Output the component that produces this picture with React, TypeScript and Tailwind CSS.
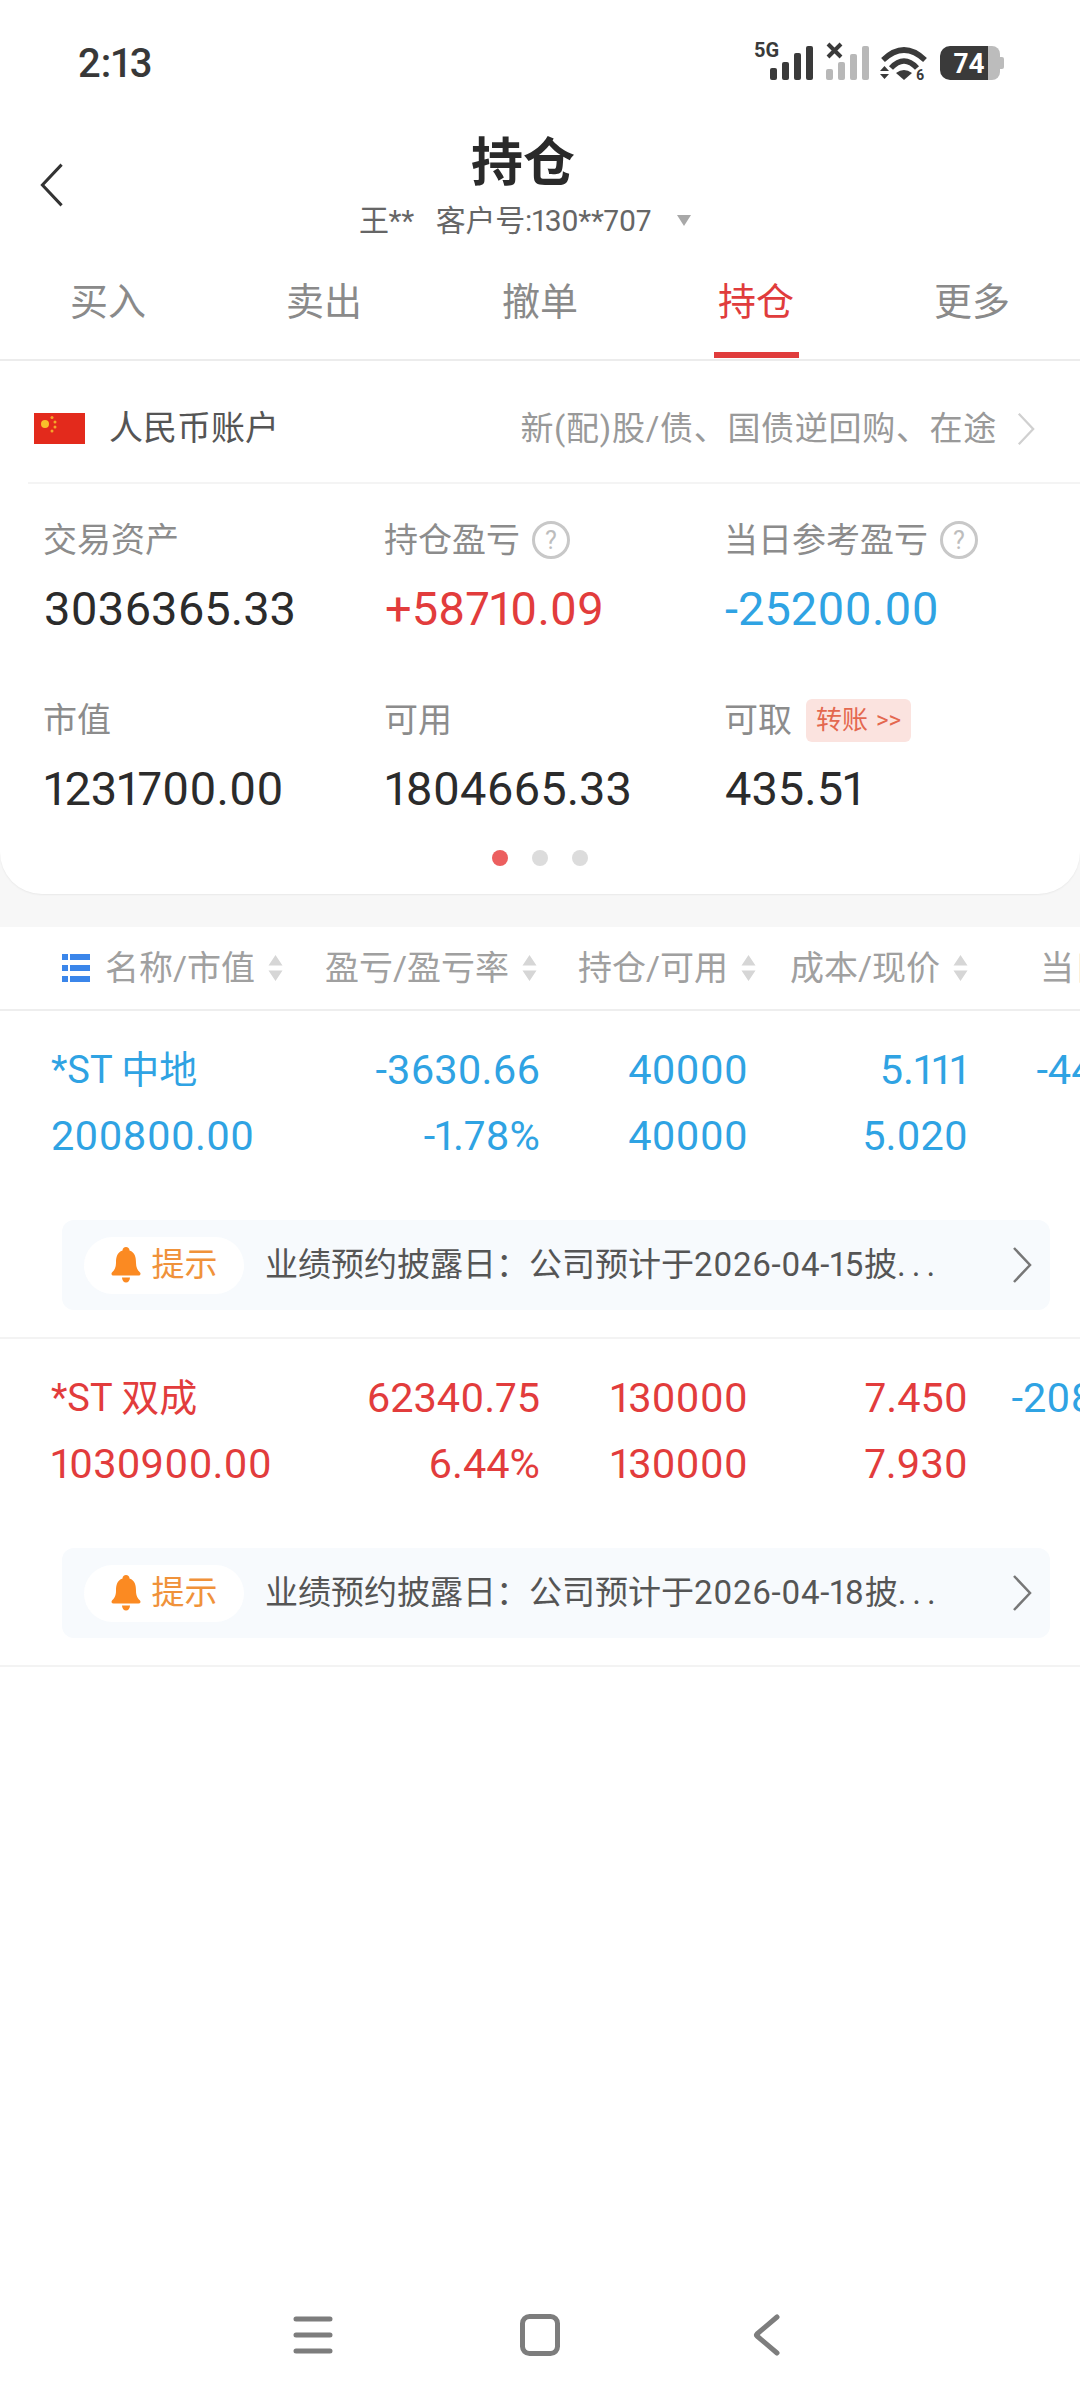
import { ReactNode } from 'react';

const FONT = "font-['Roboto','Noto_Sans_CJK_SC',sans-serif] proportional-nums";

const TABS = ['买入', '卖出', '撤单', '持仓', '更多'];

const POSITIONS = [
  {
    color: 'text-[#2fa3e3]',
    name: '*ST 中地',
    value: '200800.00',
    pnl: '-3630.66',
    rate: '-1.78%',
    hold: '40000',
    free: '40000',
    cost: '5.111',
    price: '5.020',
    day: '-4400.00',
    date: '2026-04-15',
  },
  {
    color: 'text-[#e23c3c]',
    name: '*ST 双成',
    value: '1030900.00',
    pnl: '62340.75',
    rate: '6.44%',
    hold: '130000',
    free: '130000',
    cost: '7.450',
    price: '7.930',
    day: '-20800.00',
    date: '2026-04-18',
  },
];

function StatusIcons() {
  return (
    <svg width="258" height="64" viewBox="750 30 258 64" className="shrink-0">
      <text x="754" y="57" fontSize="20" fontWeight="700" fill="#3a3a3a" fontFamily="Roboto, sans-serif">
        5G
      </text>
      <g fill="#3a3a3a">
        <rect x="770" y="68" width="7" height="12" rx="2" />
        <rect x="782" y="62" width="7" height="18" rx="2" />
        <rect x="794" y="53" width="7" height="27" rx="2" />
        <rect x="806" y="46" width="7" height="34" rx="2" />
      </g>
      <path d="M828 44l13 13M841 44l-13 13" stroke="#3a3a3a" strokeWidth="4" fill="none" />
      <g fill="#b8b8b8">
        <rect x="826" y="69" width="7" height="11" rx="2" />
        <rect x="838" y="62" width="7" height="18" rx="2" />
        <rect x="850" y="54" width="7" height="26" rx="2" />
        <rect x="862" y="46" width="7" height="34" rx="2" />
      </g>
      <path d="M883 60Q904 40 925 60" stroke="#3a3a3a" strokeWidth="5.5" fill="none" />
      <path d="M891 68Q904 54 917 68" stroke="#3a3a3a" strokeWidth="5.5" fill="none" />
      <path d="M896 73Q904 67 912 73L904 80Z" fill="#3a3a3a" />
      <path d="M880 71h9l-4.500-5ZM880 74h9l-4.500 5Z" fill="#3a3a3a" />
      <text x="916" y="80" fontSize="14" fontWeight="700" fill="#3a3a3a" fontFamily="Roboto, sans-serif">
        6
      </text>
      <path d="M950 46H988V80H950A10 10 0 0 1 940 70V56A10 10 0 0 1 950 46Z" fill="#3a3a3a" />
      <path d="M988 46H992A8 8 0 0 1 1000 54V72A8 8 0 0 1 992 80H988Z" fill="#bcbcbc" />
      <path d="M1000 57h2a2 2 0 0 1 2 2v8a2 2 0 0 1-2 2h-2Z" fill="#bcbcbc" />
      <text x="969" y="73" textAnchor="middle" fontSize="28" fontWeight="700" fill="#fff" fontFamily="Roboto, sans-serif">
        74
      </text>
    </svg>
  );
}

function Flag() {
  return (
    <svg width="51" height="31" viewBox="0 0 51 31" className="shrink-0">
      <rect width="51" height="31" fill="#e32a1c" />
      <circle cx="11" cy="11" r="4" fill="#f9c12a" />
      <g fill="#f4a62a">
        <circle cx="18" cy="4.500" r="1.500" />
        <circle cx="21" cy="9" r="1.500" />
        <circle cx="21" cy="14" r="1.500" />
        <circle cx="18" cy="18" r="1.500" />
      </g>
    </svg>
  );
}

function Chevron({ className }: { className: string }) {
  return (
    <svg viewBox="0 0 20 36" className={className} fill="none" stroke="currentColor" strokeWidth="2.500">
      <path d="M2 1l16 17L2 35" />
    </svg>
  );
}

function Help() {
  return (
    <span className="ml-[12px] flex h-[38px] w-[38px] items-center justify-center rounded-full border-[3px] border-[#c8c8c8] text-[25px] leading-none text-[#bdbdbd]">
      ?
    </span>
  );
}

function Metric({ label, extra, value, color }: { label: string; extra?: ReactNode; value: string; color: string }) {
  return (
    <div>
      <div className="flex h-[48px] items-center text-[34px] text-[#8c8c8c]">
        {label}
        {extra}
      </div>
      <div className={`mt-[12px] flex h-[64px] items-center pl-[1px] text-[47px] leading-none ${color}`}>{value}</div>
    </div>
  );
}

function SortIcon() {
  return (
    <svg width="17" height="26" viewBox="0 0 17 26" className="ml-[12px] shrink-0" fill="#d6d6d6">
      <path d="M8.500 0l7 10.500h-14zM8.500 26l-7-10.500h14z" />
    </svg>
  );
}

function HeaderCell({ label, width }: { label: string; width: string }) {
  return (
    <div className={`flex shrink-0 items-center ${width}`}>
      {label}
      <SortIcon />
    </div>
  );
}

function ListIcon() {
  return (
    <svg width="28" height="28" viewBox="0 0 28 28" className="mr-[15px] shrink-0" fill="#3b86ea">
      <path d="M0 0h6v6H0zM8 0h20v6H8zM0 11h6v6H0zM8 11h20v6H8zM0 22h6v6H0zM8 22h20v6H8z" />
    </svg>
  );
}

function Bell() {
  return (
    <svg width="30" height="36" viewBox="0 0 30 36" className="shrink-0" fill="#fb8a22">
      <path d="M15 0c2 0 3.500 1.500 3.500 3.500C24 5.500 25 10 25 16c0 5 2 7.500 4 9.500 1 1 .5 3-1.500 3h-25c-2 0-2.500-2-1.500-3 2-2 4-4.500 4-9.500 0-6 1-10.500 6.500-12.500C11.500 1.500 13 0 15 0z" />
      <path d="M11 30.500h8c0 3-2 5-4 5s-4-2-4-5z" />
    </svg>
  );
}

function PositionRow({ item }: { item: (typeof POSITIONS)[number] }) {
  return (
    <div className="border-b-2 border-[#f3f3f3] pb-[27px] pt-[26px]">
      <div className={`flex h-[66px] items-center overflow-hidden whitespace-nowrap pl-[51px] text-[41.5px] ${item.color}`}>
        <div className="w-[289px] shrink-0 text-[38px]">{item.name}</div>
        <div className="w-[200px] shrink-0 text-right">{item.pnl}</div>
        <div className="w-[208px] shrink-0 text-right">{item.hold}</div>
        <div className="w-[220px] shrink-0 text-right">{item.cost}</div>
        <div className="w-[234px] shrink-0 text-right text-[#2fa3e3]">{item.day}</div>
      </div>
      <div className={`flex h-[66px] items-center overflow-hidden whitespace-nowrap pl-[51px] text-[41.5px] ${item.color}`}>
        <div className="w-[289px] shrink-0">{item.value}</div>
        <div className="w-[200px] shrink-0 text-right">{item.rate}</div>
        <div className="w-[208px] shrink-0 text-right">{item.free}</div>
        <div className="w-[220px] shrink-0 text-right">{item.price}</div>
      </div>
      <div className="ml-[62px] mr-[30px] mt-[51px] flex h-[90px] items-center rounded-[12px] bg-[#f7fafd] pl-[22px] pr-[18px]">
        <div className="flex h-[57px] w-[160px] shrink-0 items-center justify-center gap-[11px] rounded-full bg-white text-[33px] text-[#f0923a]">
          <Bell />
          提示
        </div>
        <div className="ml-[21px] flex-1 whitespace-nowrap text-[33px] text-[#555555]">
          业绩预约披露日：公司预计于<span className="tracking-[0.6px]">{item.date}</span>披<span className="tracking-[6px]">...</span>
        </div>
        <Chevron className="h-[36px] w-[20px] shrink-0 text-[#777777]" />
      </div>
    </div>
  );
}

export default function App() {
  return (
    <div className={`flex h-[2400px] w-[1080px] flex-col overflow-hidden bg-white ${FONT}`}>
      <div className="flex h-[124px] shrink-0 items-center justify-between pl-[78px] pr-[72px]">
        <span className="pt-[3px] text-[40px] font-medium text-[#383838]">2:13</span>
        <StatusIcons />
      </div>

      <div className="relative shrink-0">
        <Chevron className="absolute left-[40px] top-[35px] h-[52px] w-[24px] -scale-x-100 text-[#333333]" />
        <div className="flex h-[72px] items-center justify-center pr-[34px] pt-[8px] text-[52px] font-bold text-[#2a2a2a]">持仓</div>
        <div className="flex h-[48px] items-center justify-center pr-[30px] text-[30px] tracking-[-0.3px] text-[#666666]">
          <span>王**</span>
          <span className="ml-[22px]">客户号:130**707</span>
          <span className="ml-[26px] h-0 w-0 border-x-[7px] border-t-[11px] border-x-transparent border-t-[#a8a8a8]" />
        </div>
      </div>

      <div className="grid h-[117px] shrink-0 grid-cols-5 border-b-2 border-[#ececec]">
        {TABS.map((tab) => (
          <div
            key={tab}
            className={`relative flex items-center justify-center pt-[1px] text-[38px] ${tab === '持仓' ? 'text-[#e03c3c]' : 'text-[#8a8a8a]'}`}
          >
            {tab}
            {tab === '持仓' && <span className="absolute bottom-[1px] h-[6px] w-[85px] bg-[#e03c3c]" />}
          </div>
        ))}
      </div>

      <div className="shrink-0 bg-[#f7f7f7] pb-[33px]">
        <div className="rounded-b-[42px] bg-white pb-[28px] shadow-[0_1px_2px_rgba(0,0,0,0.06)]">
          <div className="flex h-[121px] items-center pl-[34px] pr-[45px] pt-[14px]">
            <Flag />
            <span className="ml-[24px] text-[34px] text-[#555555]">人民币账户</span>
            <span className="ml-auto text-[33px] tracking-[0.7px] text-[#999999]">新(配)股/债、国债逆回购、在途</span>
            <Chevron className="ml-[20px] h-[34px] w-[18px] text-[#d0d0d0]" />
          </div>
          <div className="ml-[28px] h-[2px] bg-[#f4f4f4]" />
          <div className="grid grid-cols-[341px_340px_1fr] gap-y-[56px] pl-[43px] pt-[32px]">
            <Metric label="交易资产" value="3036365.33" color="text-[#2b2b2b]" />
            <Metric label="持仓盈亏" extra={<Help />} value="+58710.09" color="text-[#e23c3c]" />
            <Metric label="当日参考盈亏" extra={<Help />} value="-25200.00" color="text-[#2fa3e3]" />
            <Metric label="市值" value="1231700.00" color="text-[#2b2b2b]" />
            <Metric label="可用" value="1804665.33" color="text-[#2b2b2b]" />
            <Metric
              label="可取"
              value="435.51"
              color="text-[#2b2b2b]"
              extra={
                <span className="ml-[14px] flex h-[43px] w-[105px] items-center justify-center gap-[8px] rounded-[6px] bg-[#fbe3df] text-[26px] text-[#e4684f]">
                  转账<span className="text-[24px]">&gt;&gt;</span>
                </span>
              }
            />
          </div>
          <div className="mt-[30px] flex justify-center gap-[24px]">
            <span className="h-[16px] w-[16px] rounded-full bg-[#ec5f5f]" />
            <span className="h-[16px] w-[16px] rounded-full bg-[#dcdcdc]" />
            <span className="h-[16px] w-[16px] rounded-full bg-[#dcdcdc]" />
          </div>
        </div>
      </div>

      <div className="flex h-[84px] shrink-0 items-center overflow-hidden whitespace-nowrap border-b-2 border-[#eeeeee] pl-[62px] text-[34px] text-[#a0a0a0]">
        <ListIcon />
        <HeaderCell label="名称/市值" width="w-[220px]" />
        <HeaderCell label="盈亏/盈亏率" width="w-[253px]" />
        <HeaderCell label="持仓/可用" width="w-[212px]" />
        <HeaderCell label="成本/现价" width="w-[250px]" />
        <span>当日参考盈亏</span>
      </div>

      {POSITIONS.map((item) => (
        <PositionRow key={item.name} item={item} />
      ))}

      <div className="mt-auto flex h-[130px] shrink-0 items-center justify-center gap-[187px] text-[#7d7d7d]">
        <svg width="40" height="40" viewBox="0 0 40 40" fill="none" stroke="currentColor" strokeWidth="5" strokeLinecap="round">
          <path d="M3 4h34M3 20h34M3 36h34" />
        </svg>
        <svg width="40" height="42" viewBox="0 0 40 42" fill="none" stroke="currentColor" strokeWidth="5">
          <rect x="2.500" y="2.500" width="35" height="37" rx="7" />
        </svg>
        <svg width="40" height="42" viewBox="0 0 40 42" fill="none" stroke="currentColor" strokeWidth="5" strokeLinecap="round" strokeLinejoin="round">
          <path d="M30 3L10 20q-1 1 0 2l20 17" />
        </svg>
      </div>
    </div>
  );
}
